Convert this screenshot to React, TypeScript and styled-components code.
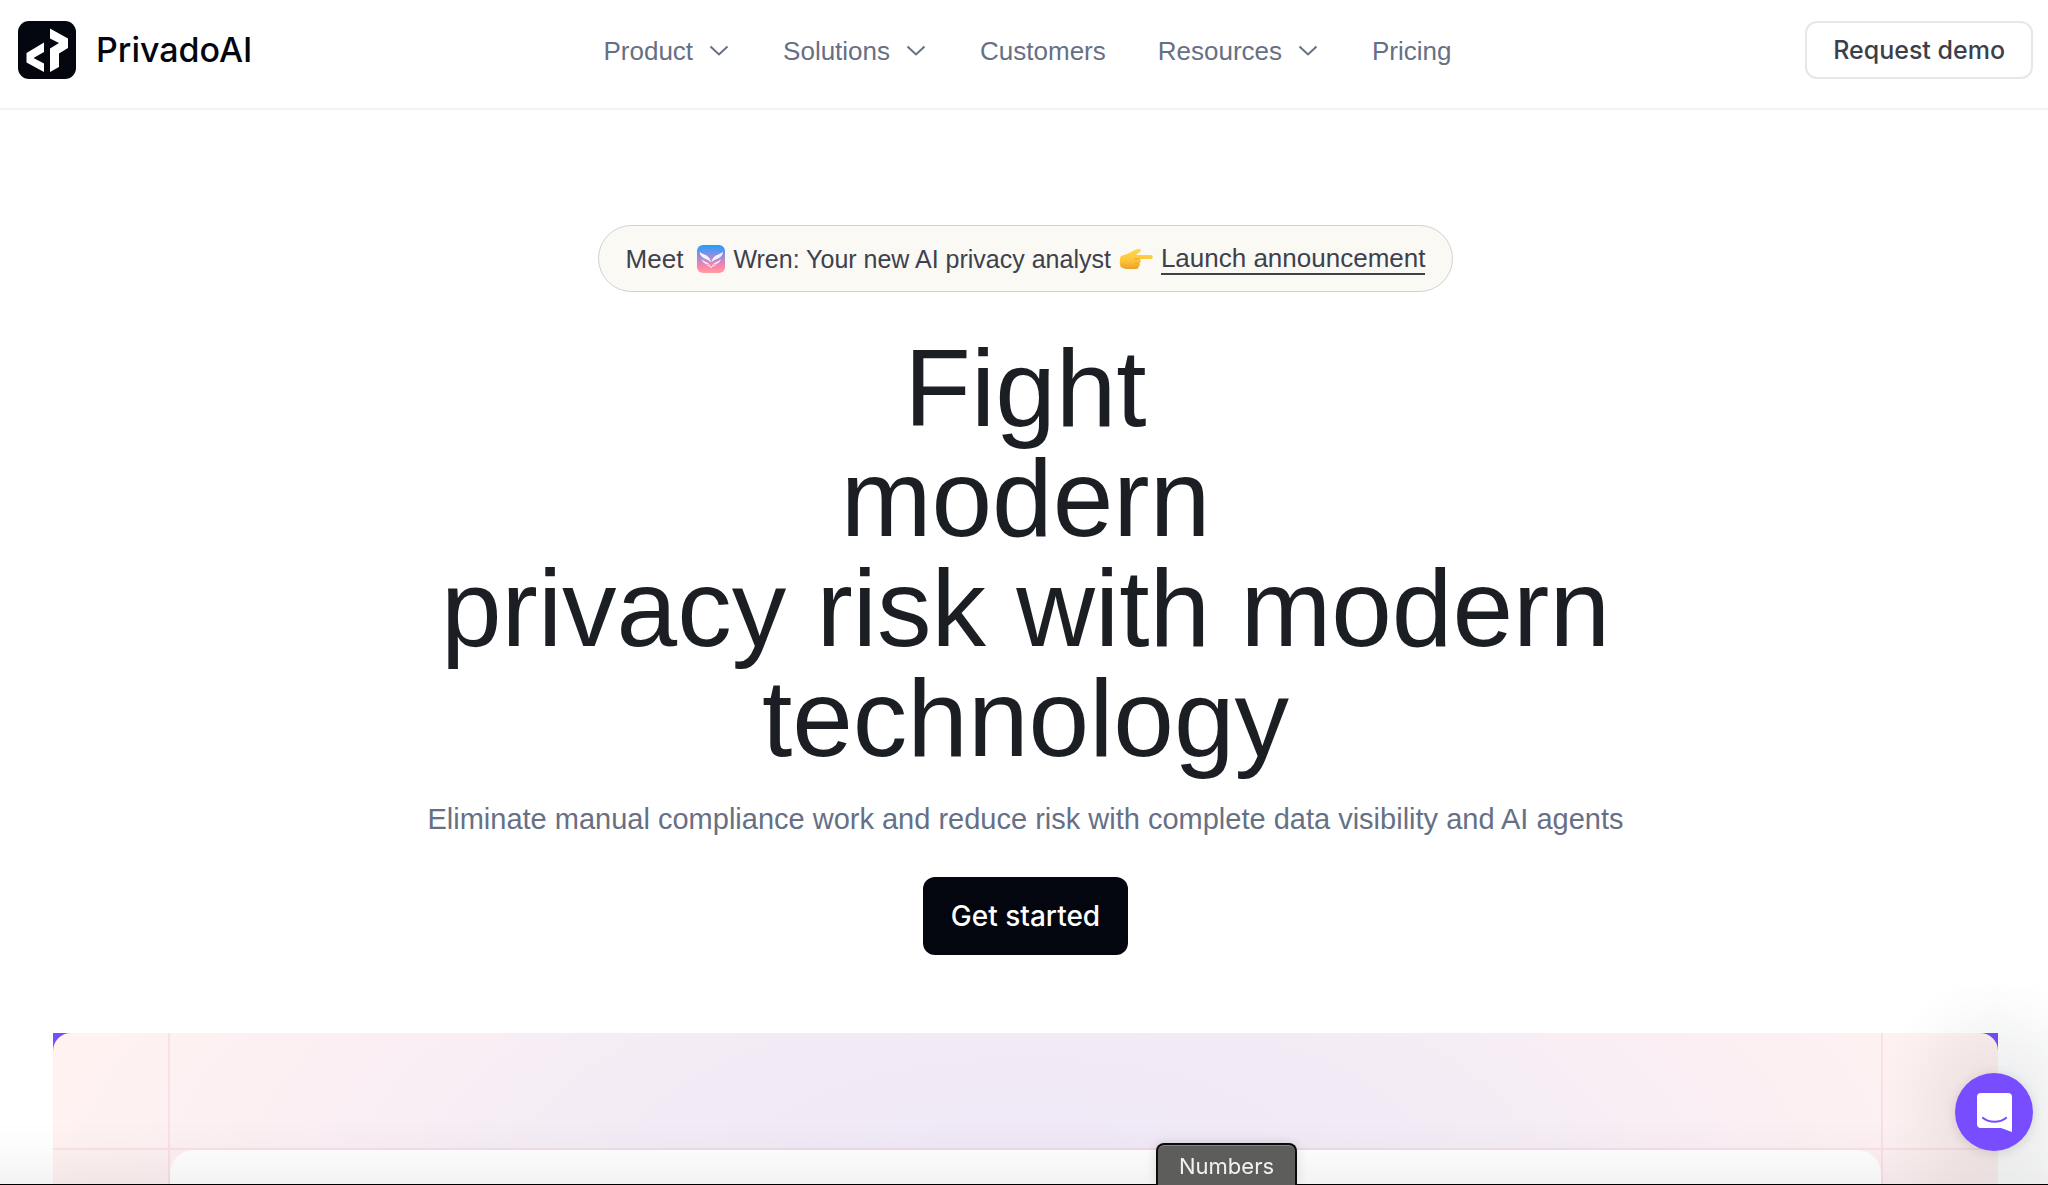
import React from 'react';
import styled, { createGlobalStyle } from 'styled-components';

const sans = '"Liberation Sans", Arial, sans-serif';
const medium = 'Inter, "Liberation Sans", sans-serif';

const GlobalStyle = createGlobalStyle`
  *, *::before, *::after { box-sizing: border-box; }
  body { margin: 0; background: #fff; font-family: ${sans}; color: #1b1e24; }
  button { font: inherit; cursor: pointer; }
  a { color: inherit; text-decoration: none; }
`;

const Page = styled.div`
  min-height: 100vh;
  display: flex;
  flex-direction: column;
`;

const Header = styled.header`
  display: grid;
  grid-template-columns: 1fr auto 1fr;
  align-items: center;
  padding: 21px 15px 29px 18px;
  border-bottom: 2px solid #f4f4f5;
`;

const Brand = styled.a`
  justify-self: start;
  display: flex;
  align-items: center;
  gap: 20px;
  font: 500 34px/40px ${medium};
  color: #03060f;
`;

const Nav = styled.nav`
  display: flex;
  align-items: center;
  gap: 52px;
  padding: 2px 0 0 4px;
  font-size: 26px;
  line-height: 32px;
  color: #667085;
`;

const NavLink = styled.a``;

const NavButton = styled.button`
  display: flex;
  align-items: center;
  gap: 14px;
  padding: 0;
  border: 0;
  background: none;
  color: inherit;
`;

const DemoButton = styled.button`
  justify-self: end;
  height: 58px;
  padding: 0 26px;
  border: 2px solid #e6e7ec;
  border-radius: 12px;
  background: #fff;
  color: #3a3f4b;
  && { font: 500 25px/32px ${medium}; }
`;

const Main = styled.main`
  flex: 1;
  display: flex;
  flex-direction: column;
  padding: 115px 50px 0 53px;
`;

const Hero = styled.section`
  display: flex;
  flex-direction: column;
  align-items: center;
  text-align: center;
`;

const Announcement = styled.p`
  display: flex;
  align-items: center;
  gap: 8px;
  height: 67px;
  margin: 0 0 41px;
  padding: 0 27px;
  border: 1px solid #cfd1d8;
  border-radius: 34px;
  background: #faf9f4;
  color: #3d414d;
  font-size: 25px;
  line-height: 32px;
`;

const Meet = styled.span`
  margin-right: 6px;
  font-size: 26px;
`;

const AnnouncementLink = styled.a`
  border-bottom: 2px solid #3d414d;
  font-size: 26px;
  line-height: 30px;
`;

const Title = styled.h1`
  margin: 0 0 26px;
  font-size: 109px;
  font-weight: 400;
  line-height: 110px;
  color: #1b1e23;
`;

const Subtitle = styled.p`
  margin: 0 0 38px;
  font-size: 29px;
  line-height: 40px;
  color: #667085;
`;

const StartButton = styled.button`
  height: 78px;
  padding: 0 28px;
  border: 0;
  border-radius: 12px;
  background: #03060f;
  color: #fff;
  && { font: 500 28px/36px ${medium}; }
`;

const Showcase = styled.section`
  flex: 1;
  display: flex;
  margin-top: 78px;
  background: #784dff;
`;

const ShowcaseSurface = styled.div`
  flex: 1;
  display: grid;
  grid-template-columns: 117px 1fr 117px;
  grid-template-rows: 117px minmax(35px, 1fr);
  border-radius: 18px 18px 0 0;
  background: radial-gradient(ellipse 50% 420px at 50% 100%, #efe7f7 0%, #f3ecf5 45%, #fbeff3 78%, #fff2f1 100%);
`;

const Cell = styled.div<{ $left?: boolean; $right?: boolean; $bottom?: boolean }>`
  border: 0 solid rgba(240, 150, 175, 0.18);
  border-left-width: ${p => (p.$left ? 2 : 0)}px;
  border-right-width: ${p => (p.$right ? 2 : 0)}px;
  border-bottom-width: ${p => (p.$bottom ? 2 : 0)}px;
`;

const Panel = styled.div`
  border-radius: 24px 24px 0 0;
  background: #fff;
`;

const BottomShade = styled.div`
  position: fixed;
  inset: auto 0 0 0;
  height: 64px;
  border-bottom: 1px solid #000;
  background: linear-gradient(rgba(20, 20, 20, 0), rgba(20, 20, 20, 0.015) 45%, rgba(20, 20, 20, 0.05));
  pointer-events: none;
`;

const CornerShade = styled.div`
  position: fixed;
  right: 0;
  bottom: 0;
  width: 180px;
  height: 200px;
  background: radial-gradient(ellipse 120px 130px at 129px 120px, rgba(29, 39, 54, 0.1), rgba(29, 39, 54, 0.06) 40%, rgba(29, 39, 54, 0.02) 75%, rgba(29, 39, 54, 0));
  pointer-events: none;
`;

const ChatButton = styled.button`
  position: fixed;
  right: 15px;
  bottom: 34px;
  display: grid;
  place-items: center;
  width: 78px;
  height: 78px;
  padding: 0;
  border: 0;
  border-radius: 50%;
  background: #784dff;
  box-shadow: 0 2px 12px rgba(0, 0, 0, 0.12);
`;

const Tooltip = styled.div`
  position: fixed;
  left: 1156px;
  bottom: 0;
  height: 42px;
  padding: 5px 21px 0;
  border: 2px solid #0b0b0b;
  border-bottom: 0;
  border-radius: 8px 8px 0 0;
  background: #5d5d5c;
  box-shadow: inset 0 1px 0 #858585, 0 0 12px rgba(0, 0, 0, 0.12);
  color: #f1f1f1;
  font: 400 22px/32px ${medium};
`;

const Logo = () => (
  <svg width="58" height="58" viewBox="0 0 58 58" aria-hidden="true">
    <rect width="58" height="58" rx="11" fill="#03060f" />
    <path fill="#fff" d="M26 21.500v9.500L15.500 37 26 42.500V51L8.500 41.500v-9.500z" />
    <path fill="#fff" d="M32 7.500l18 10v9.500l-9 5.500V46L32 51V27.500l9-5.500-9-4.500z" />
  </svg>
);

const Chevron = () => (
  <svg width="24" height="24" viewBox="0 0 24 24" fill="none" stroke="currentColor" strokeWidth="2" aria-hidden="true">
    <path d="M3.500 7.500l8.500 8 8.500-8" />
  </svg>
);

const WrenIcon = () => (
  <svg width="28" height="28" viewBox="0 0 28 28" aria-hidden="true">
    <defs>
      <linearGradient id="wren" x1="0" y1="0" x2="0" y2="1">
        <stop offset="0" stopColor="#1f9dff" />
        <stop offset="0.5" stopColor="#b58bd0" />
        <stop offset="0.78" stopColor="#ff83a6" />
        <stop offset="1" stopColor="#ff9f9f" />
      </linearGradient>
    </defs>
    <rect width="28" height="28" rx="6" fill="url(#wren)" />
    <g fill="#f6f1fb">
      <path d="M2.500 7c3.500 3 10.500 2.500 11.500 10.500C11 13 3.500 14.500 2.500 7z" />
      <path d="M26 7c-3.500 3-10.500 2.500-11.500 10.500C17.500 13 25 14.500 26 7z" />
      <path d="M4.500 14c2 6.500 6.500 3.500 9 7C12 17 7.500 17.500 4.500 14z" />
      <path d="M24 14c-2 6.500-6.500 3.500-9 7C16.500 17 21 17.500 24 14z" />
      <path d="M8.500 19.500c2 .3 4.500.3 5.700 2.500 1.200-2.200 3.700-2.200 5.700-2.500-2 1.500-4.700 1.500-5.700 3.800-1-2.300-3.700-2.300-5.700-3.800z" />
    </g>
  </svg>
);

const PointingHand = () => (
  <svg width="34" height="22" viewBox="0 0 34 22" aria-hidden="true">
    <defs>
      <linearGradient id="hand" x1="0" y1="0" x2="0" y2="1">
        <stop offset="0" stopColor="#ffd84d" />
        <stop offset="0.6" stopColor="#fcc33a" />
        <stop offset="1" stopColor="#ee9f25" />
      </linearGradient>
    </defs>
    <path
      fill="url(#hand)"
      d="M2 8c3-1 6-2 9-3.500C14 3 17 1 20 1c2.500 0 2.500 2.500 0 3.500L17 7h14.500c3 0 3 4 0 4H21c1.500 2 1 3.500-.5 4 .8 1.500.3 3-1 3.500.3 1.500-.7 2.500-2.500 2.500H8c-3 0-5-1-6.500-2.500C.5 16 .5 10 2 8z"
    />
    <path fill="none" stroke="#e8a52c" strokeWidth="1" d="M15 11H21M16 15h4M16 18.500h3" />
  </svg>
);

const ChatIcon = () => (
  <svg width="35" height="39" viewBox="0 0 35 39" aria-hidden="true">
    <path fill="#fff" d="M4 0h27a4 4 0 0 1 4 4v35l-11-4H4a4 4 0 0 1-4-4V4a4 4 0 0 1 4-4z" />
    <path fill="none" stroke="#784dff" strokeWidth="2.200" strokeLinecap="round" d="M6 25c6.500 5 16.500 5 23 0" />
  </svg>
);

const links = [
  { label: 'Product', menu: true },
  { label: 'Solutions', menu: true },
  { label: 'Customers', menu: false },
  { label: 'Resources', menu: true },
  { label: 'Pricing', menu: false },
];

export default function App() {
  return (
    <Page>
      <GlobalStyle />
      <Header>
        <Brand href="#"><Logo />PrivadoAI</Brand>
        <Nav>
          {links.map(l => l.menu
            ? <NavButton key={l.label} type="button">{l.label}<Chevron /></NavButton>
            : <NavLink key={l.label} href="#">{l.label}</NavLink>)}
        </Nav>
        <DemoButton type="button">Request demo</DemoButton>
      </Header>
      <Main>
        <Hero>
          <Announcement>
            <Meet>Meet</Meet>
            <WrenIcon />
            <span>Wren: Your new AI privacy analyst</span>
            <PointingHand />
            <AnnouncementLink href="#">Launch announcement</AnnouncementLink>
          </Announcement>
          <Title>Fight<br />modern<br />privacy risk with modern<br />technology</Title>
          <Subtitle>Eliminate manual compliance work and reduce risk with complete data visibility and AI agents</Subtitle>
          <StartButton type="button">Get started</StartButton>
        </Hero>
        <Showcase>
          <ShowcaseSurface>
            <Cell $right $bottom />
            <Cell $bottom />
            <Cell $left $bottom />
            <Cell $right />
            <Panel />
            <Cell $left />
          </ShowcaseSurface>
        </Showcase>
      </Main>
      <BottomShade />
      <CornerShade />
      <ChatButton type="button" aria-label="Open chat"><ChatIcon /></ChatButton>
      <Tooltip role="tooltip">Numbers</Tooltip>
    </Page>
  );
}
